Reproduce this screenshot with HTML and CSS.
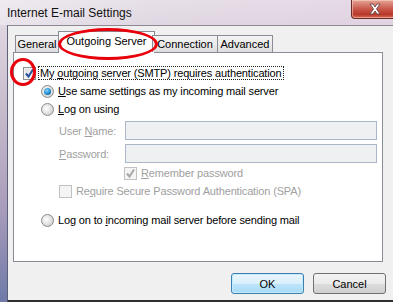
FILE: index.html
```html
<!DOCTYPE html>
<html lang="en">
<head>
<meta charset="UTF-8">
<title>Internet E-mail Settings</title>
<link rel="stylesheet" href="styles.css">
</head>
<body>

<div class="window">
  <div class="titlebar">
    <span class="title">Internet E-mail Settings</span>
    <div class="close">
      <svg width="18" height="12" viewBox="0 0 18 12">
        <path d="M4 1 L7 1 L9 4 L11 1 L14 1 L10.5 6 L14 11 L11 11 L9 8 L7 11 L4 11 L7.5 6 Z" fill="#fff" stroke="#6a4a48" stroke-width="0.9" stroke-linejoin="round"/>
      </svg>
    </div>
  </div>

  <div class="client">
    <div class="tabs">
      <div class="tab t-general">General</div>
      <div class="tab active t-outgoing">Outgoing Server</div>
      <div class="tab t-connection">Connection</div>
      <div class="tab t-advanced">Advanced</div>
    </div>

    <div class="panel">
      <div class="row row-auth">
        <span class="check"><svg width="13" height="13" viewBox="0 0 13 13"><path d="M3 6.5 L5.5 9.5 L10 2.5" fill="none" stroke="#2a4fa0" stroke-width="2"/></svg></span>
        <span class="label focus">My <u>o</u>utgoing server (SMTP) requires authentication</span>
      </div>
      <div class="row indent1">
        <span class="radio on"></span>
        <span class="label"><u>U</u>se same settings as my incoming mail server</span>
      </div>
      <div class="row indent1">
        <span class="radio"></span>
        <span class="label"><u>L</u>og on using</span>
      </div>
      <div class="field field-user">
        <span class="field-label">User <u>N</u>ame:</span>
        <span class="input"></span>
      </div>
      <div class="field">
        <span class="field-label"><u>P</u>assword:</span>
        <span class="input"></span>
      </div>
      <div class="row indent3">
        <span class="check disabled"><svg width="13" height="13" viewBox="0 0 13 13"><path d="M3 6.5 L5.5 9.5 L10 2.5" fill="none" stroke="#a8a8a8" stroke-width="2"/></svg></span>
        <span class="label gray"><u>R</u>emember password</span>
      </div>
      <div class="row indent2">
        <span class="check disabled"></span>
        <span class="label gray">Re<u>q</u>uire Secure Password Authentication (SPA)</span>
      </div>
      <div class="row indent1 row-last">
        <span class="radio"></span>
        <span class="label">Log on to <u>i</u>ncoming mail server before sending mail</span>
      </div>
    </div>

    <div class="buttons">
      <button class="btn default">OK</button>
      <button class="btn">Cancel</button>
    </div>
  </div>

  <div class="mark mark-tab"></div>
  <div class="mark mark-check"></div>
</div>

</body>
</html>
```

FILE: styles.css
```css
html, body { margin:0; padding:0; }
body { font-family: "Liberation Sans", Arial, sans-serif; font-size:11px; color:#000; }

.window {
    position:relative;
    width:393px;
    height:302px;
    overflow:hidden;
    display:flex;
    flex-direction:column;
    background:linear-gradient(#e6dfe8, #c9bccd 35%, #a79bbb 70%, #6f7aa8 100%);
}

.titlebar {
    height:25px;
    display:flex;
    align-items:flex-start;
    justify-content:space-between;
    background:linear-gradient(90deg, rgba(255,255,255,0.35), rgba(255,255,255,0) 40%, rgba(230,200,225,0.3));
}
.title {
    font-size:12px;
    padding:6px 0 0 7px;
    color:#111;
}
.close {
    width:45px;
    height:18px;
    margin-right:-5px;
    border:1px solid #6d2a22;
    border-top:none;
    border-radius:0 0 4px 4px;
    background:linear-gradient(#e4a597, #c9574a 50%, #b8382b 80%, #d76a55);
    display:flex;
    align-items:center;
    justify-content:center;
    box-shadow:inset 0 0 0 1px rgba(255,220,210,0.5);
}

.client {
    flex:1;
    margin-left:7px;
    border-top:1px solid #8d8894;
    border-left:1px solid #5c6078;
    border-bottom:2px solid #2e2e33;
    background:#f0f0f0;
    display:flex;
    flex-direction:column;
}

.tabs {
    display:flex;
    align-items:flex-end;
    height:26px;
    padding-left:7px;
    position:relative;
    z-index:1;
}
.tab {
    height:17px;
    border:1px solid #898c95;
    border-bottom:none;
    background:linear-gradient(#f3f3f3, #ebebeb 50%, #dddddd);
    display:flex;
    align-items:center;
    justify-content:center;
    box-sizing:border-box;
}
.tab + .tab { margin-left:-1px; }
.tab.active {
    background:#fff;
    margin:0 -2px -1px -1px;
    padding-bottom:3px;
    height:22px;
}
.t-general { width:44px; }
.t-outgoing { width:97px; }
.t-connection { width:66px; }
.t-advanced { width:56px; }

.panel {
    margin-left:5px;
    width:370px;
    height:210px;
    border:1px solid #898c95;
    background:#fff;
    display:flex;
    flex-direction:column;
    padding-top:11px;
    box-sizing:border-box;
}

.row {
    height:18px;
    display:flex;
    align-items:center;
    gap:3px;
}
.row-auth { padding-left:9px; gap:2px; }
.indent1 { padding-left:27px; }
.indent2 { padding-left:45px; }
.indent3 { padding-left:110px; margin-top:1px; }
.row-last { margin-top:11px; }

.label { padding:1px; letter-spacing:-0.15px; }
.focus { outline:1px dotted #222; outline-offset:-1px; padding:1px 2px; }
.gray { color:#a0a0a0; }

.check {
    width:13px;
    height:13px;
    box-sizing:border-box;
    border:1px solid #8f8f8f;
    background:linear-gradient(135deg, #dcdcdc, #fbfbfb);
    box-shadow:inset 0 0 0 1px #f4f4f4;
    display:inline-block;
    flex:none;
}
.check svg { display:block; margin:-1px; }
.check.disabled { border-color:#c2c2c2; background:#f4f4f4; }

.radio {
    width:13px;
    height:13px;
    box-sizing:border-box;
    border-radius:50%;
    border:1px solid #8a8a8a;
    background:radial-gradient(circle at 40% 40%, #fff, #d6d6d6 70%, #c8c8c8);
    flex:none;
    position:relative;
}
.radio.on::after {
    content:"";
    position:absolute;
    left:2px; top:2px;
    width:7px; height:7px;
    border-radius:50%;
    background:radial-gradient(circle at 40% 35%, #8fd4f8, #1a8ad0 55%, #0a4f8c);
}

.field {
    display:flex;
    align-items:center;
    height:19px;
    padding-left:45px;
    margin-top:4px;
}
.field-user { margin-top:3px; }
.field-label { width:66px; color:#a0a0a0; letter-spacing:-0.15px; }
.input {
    width:252px;
    height:19px;
    box-sizing:border-box;
    border:1px solid #a9b8c9;
    background:#eef0f2;
}

.buttons {
    display:flex;
    justify-content:flex-end;
    gap:9px;
    padding-top:11px;
    margin-right:7px;
}
.btn {
    width:73px;
    height:21px;
    font-family:inherit;
    font-size:11px;
    border:1px solid #707070;
    border-radius:3px;
    background:linear-gradient(#f2f2f2, #ebebeb 50%, #dddddd 51%, #cfcfcf);
    padding:0;
}
.btn.default {
    border-color:#3c7fb1;
    background:linear-gradient(#eaf6fd, #d9f0fc 50%, #bee6fd 51%, #a7d9f5);
    box-shadow:inset 0 0 0 1px #c3ebfd;
}

.mark {
    position:absolute;
    border:3px solid #e8000b;
    border-radius:50%;
    box-sizing:border-box;
    z-index:5;
}
.mark-tab { left:58px; top:28px; width:100px; height:32px; }
.mark-check { left:10px; top:58px; width:26px; height:28px; }
```
